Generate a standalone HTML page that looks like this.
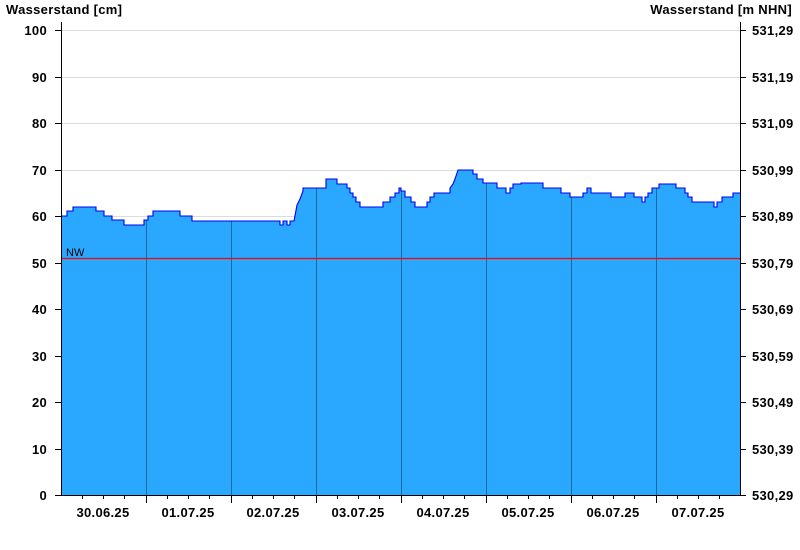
<!DOCTYPE html>
<html><head><meta charset="utf-8"><style>
html,body{margin:0;padding:0;background:#fff;}
svg{display:block;font-family:"Liberation Sans",Arial,sans-serif;}
.b{font-weight:bold;font-size:13px;letter-spacing:0.3px;fill:#000;}
</style></head><body>
<svg width="800" height="550" viewBox="0 0 800 550" xmlns="http://www.w3.org/2000/svg">
<defs>
<clipPath id="c"><path id="p" d="M61,495 V216 H67 V211 H73 V207 H96 V211 H104 V216 H112 V220 H124 V225 H144 V220 H148 V216 H153 V211 H180 V216 H192 V221 H280 V225 H283 V221 H287 V225 H290 V221 H294 L297,205 L300,199 L303,191 V188 H326 V179 H337 V184 H347 V188 H350 V193 H353 V197 H356 V202 H360 V207 H383 V202 H390 V197 H395 V193 H399 V188 H401 V191 H405 V197 H411 V202 H415 V207 H427 V202 H430 V197 H434 V193 H450 V188 L453,184 L455,179 L458,170 H473 V174 H477 V179 H483 V183 H497 V188 H506 V193 H510 V188 H513 V184 H521 V183 H543 V188 H561 V193 H570 V197 H583 V193 H587 V188 H591 V193 H611 V197 H625 V193 H634 V197 H642 V202 H645 V197 H648 V193 H652 V188 H659 V184 H676 V188 H685 V193 H688 V197 H692 V202 H714 V207 H717 V202 H722 V197 H733 V193 H740 V495 Z"/></clipPath>
</defs>
<g stroke="#dcdcdc" stroke-width="1">
<line x1="61" x2="740" y1="30.5" y2="30.5"/><line x1="61" x2="740" y1="77.5" y2="77.5"/><line x1="61" x2="740" y1="123.5" y2="123.5"/><line x1="61" x2="740" y1="170.5" y2="170.5"/><line x1="61" x2="740" y1="216.5" y2="216.5"/>
</g>
<use href="#p" fill="#2aa8ff"/>
<g clip-path="url(#c)" stroke="#1a6a9a" stroke-width="1">
<line x1="146.5" x2="146.5" y1="20" y2="495"/><line x1="231.5" x2="231.5" y1="20" y2="495"/><line x1="316.5" x2="316.5" y1="20" y2="495"/><line x1="401.5" x2="401.5" y1="20" y2="495"/><line x1="486.5" x2="486.5" y1="20" y2="495"/><line x1="571.5" x2="571.5" y1="20" y2="495"/><line x1="656.5" x2="656.5" y1="20" y2="495"/>
</g>
<path d="M61,216 H67 V211 H73 V207 H96 V211 H104 V216 H112 V220 H124 V225 H144 V220 H148 V216 H153 V211 H180 V216 H192 V221 H280 V225 H283 V221 H287 V225 H290 V221 H294 L297,205 L300,199 L303,191 V188 H326 V179 H337 V184 H347 V188 H350 V193 H353 V197 H356 V202 H360 V207 H383 V202 H390 V197 H395 V193 H399 V188 H401 V191 H405 V197 H411 V202 H415 V207 H427 V202 H430 V197 H434 V193 H450 V188 L453,184 L455,179 L458,170 H473 V174 H477 V179 H483 V183 H497 V188 H506 V193 H510 V188 H513 V184 H521 V183 H543 V188 H561 V193 H570 V197 H583 V193 H587 V188 H591 V193 H611 V197 H625 V193 H634 V197 H642 V202 H645 V197 H648 V193 H652 V188 H659 V184 H676 V188 H685 V193 H688 V197 H692 V202 H714 V207 H717 V202 H722 V197 H733 V193 H740" fill="none" stroke="#0000ee" stroke-width="1.1"/>
<line x1="61" x2="740" y1="258.5" y2="258.5" stroke="#ff0000" stroke-width="1.3"/>
<text x="66" y="256" font-size="11" fill="#000">NW</text>
<g stroke="#000" stroke-width="1">
<line x1="61.5" x2="61.5" y1="22" y2="495"/>
<line x1="740.5" x2="740.5" y1="22" y2="495"/>
<line x1="61" x2="741" y1="495.5" y2="495.5"/>
<path d="M55,30.5H61M55,77.5H61M55,123.5H61M55,170.5H61M55,216.5H61M55,263.5H61M55,309.5H61M55,356.5H61M55,402.5H61M55,449.5H61M55,495.5H61"/>
<path d="M740,30.5H746M740,77.5H746M740,123.5H746M740,170.5H746M740,216.5H746M740,263.5H746M740,309.5H746M740,356.5H746M740,402.5H746M740,449.5H746M740,495.5H746"/>
<path d="M146.5,495V503M231.5,495V503M316.5,495V503M401.5,495V503M486.5,495V503M571.5,495V503M656.5,495V503"/>
<path d="M82.5,495V499M103.5,495V499M124.5,495V499M167.5,495V499M188.5,495V499M209.5,495V499M252.5,495V499M273.5,495V499M294.5,495V499M337.5,495V499M358.5,495V499M379.5,495V499M422.5,495V499M443.5,495V499M464.5,495V499M507.5,495V499M528.5,495V499M549.5,495V499M592.5,495V499M613.5,495V499M634.5,495V499M677.5,495V499M698.5,495V499M719.5,495V499"/>
</g>
<text class="b" x="6" y="14">Wasserstand [cm]</text>
<text class="b" x="792" y="14" text-anchor="end">Wasserstand [m NHN]</text>
<g text-anchor="end">
<text class="b" x="47" y="35">100</text><text class="b" x="47" y="82">90</text><text class="b" x="47" y="128">80</text><text class="b" x="47" y="175">70</text><text class="b" x="47" y="221">60</text><text class="b" x="47" y="268">50</text><text class="b" x="47" y="314">40</text><text class="b" x="47" y="361">30</text><text class="b" x="47" y="407">20</text><text class="b" x="47" y="454">10</text><text class="b" x="47" y="500">0</text>
</g>
<g>
<text class="b" x="752" y="35">531,29</text><text class="b" x="752" y="82">531,19</text><text class="b" x="752" y="128">531,09</text><text class="b" x="752" y="175">530,99</text><text class="b" x="752" y="221">530,89</text><text class="b" x="752" y="268">530,79</text><text class="b" x="752" y="314">530,69</text><text class="b" x="752" y="361">530,59</text><text class="b" x="752" y="407">530,49</text><text class="b" x="752" y="454">530,39</text><text class="b" x="752" y="500">530,29</text>
</g>
<g text-anchor="middle">
<text class="b" x="103" y="517">30.06.25</text><text class="b" x="188" y="517">01.07.25</text><text class="b" x="273" y="517">02.07.25</text><text class="b" x="358" y="517">03.07.25</text><text class="b" x="443" y="517">04.07.25</text><text class="b" x="528" y="517">05.07.25</text><text class="b" x="613" y="517">06.07.25</text><text class="b" x="698" y="517">07.07.25</text>
</g>
</svg>
</body></html>
